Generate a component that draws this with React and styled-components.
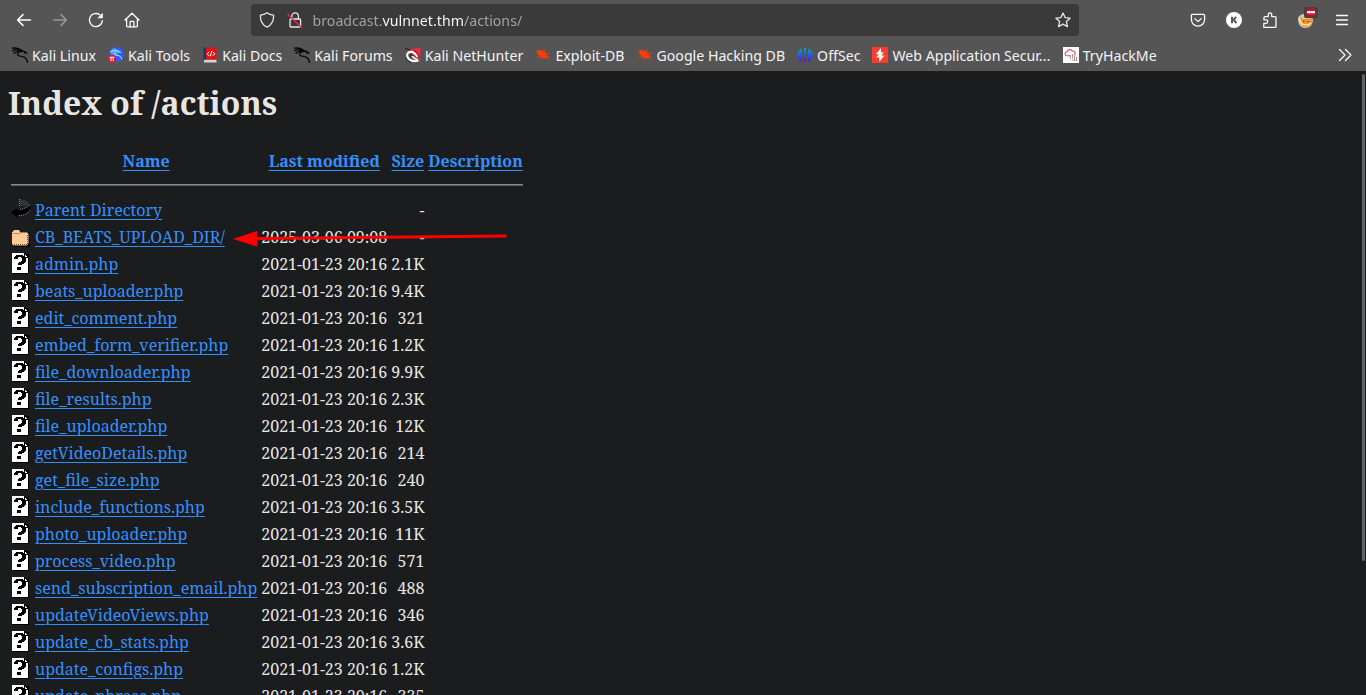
import React from "react";
import styled, { createGlobalStyle } from "styled-components";

const UI = '"Noto Sans Display", "Noto Sans", "Open Sans", sans-serif';
const SERIF = '"Noto Serif", "DejaVu Serif Condensed", "DejaVu Serif", serif';

const GlobalStyle = createGlobalStyle`
  *, *::before, *::after { box-sizing: border-box; }
  body { margin: 0; background: #1b1c1e; }
`;

const Browser = styled.div`
  height: 100vh;
  display: flex;
  flex-direction: column;
  overflow: hidden;
`;

const Chrome = styled.header`
  flex: none;
  background: #555555;
  color: #f0f0f2;
  font-family: ${UI};
  font-size: 15px;
`;

const NavBar = styled.nav`
  display: flex;
  align-items: center;
  height: 40px;
  padding: 0 6px;
`;

const ToolButton = styled.button`
  flex: none;
  width: 36px;
  height: 32px;
  display: flex;
  align-items: center;
  justify-content: center;
  padding: 0;
  border: 0;
  border-radius: 4px;
  background: none;
  color: #fbfbfe;
  opacity: ${(p) => (p.disabled ? 0.4 : 1)};
`;

const Spacer = styled.div`
  flex: 1;
`;

const UrlBar = styled.div`
  flex: 8.2;
  min-width: 0;
  height: 32px;
  display: flex;
  align-items: center;
  padding: 0 2px;
  border-radius: 4px;
  background: #3a3a3a;
`;

const UrlButton = styled(ToolButton)`
  width: 28px;
  color: #e6e6e8;
`;

const UrlInput = styled.input`
  flex: 1;
  min-width: 0;
  height: 28px;
  margin-left: 4px;
  padding: 0;
  border: 0;
  outline: 0;
  font: inherit;
  color: transparent;
  caret-color: #fbfbfe;
  background: linear-gradient(
    90deg,
    #a3a3a5 0 69px,
    #fbfbfe 69px 150px,
    #a3a3a5 150px
  );
  background-clip: text;
  -webkit-background-clip: text;
`;

const Bookmarks = styled.div`
  display: flex;
  align-items: center;
  height: 31px;
  padding: 0 12px 1px;
  gap: 12px;
`;

const Bookmark = styled.a`
  flex: none;
  display: flex;
  align-items: center;
  gap: 4px;
  height: 24px;
  color: inherit;
  text-decoration: none;
  white-space: nowrap;
`;

const Overflow = styled(ToolButton)`
  width: 18px;
  height: 24px;
  margin-left: auto;
`;

const Page = styled.main`
  flex: 1;
  min-height: 0;
  position: relative;
  overflow: hidden;
  padding: 0 8px;
  background: #1b1c1e;
  color: #e8e6e3;
  font-family: ${SERIF};
  font-size: 16px;
  line-height: 22px;
`;

const Title = styled.h1`
  margin: 10px 0 21px;
  font-size: 32px;
  line-height: 44px;
  font-weight: 700;
`;

const Listing = styled.table`
  border-collapse: separate;
  border-spacing: 2px;
  white-space: nowrap;

  th,
  td {
    padding: 1px;
  }
`;

const Row = styled.tr`
  height: 25px;
`;

const IconCell = styled.td`
  vertical-align: top;
`;

const NumCell = styled.td`
  text-align: right;
`;

const PageLink = styled.a`
  color: #3391ff;
  text-decoration: underline;
  text-decoration-thickness: 1px;
  text-underline-offset: 3px;
`;

const Rule = styled.hr`
  height: 2px;
  margin: 8px 0;
  border: 0;
  border-top: 1px solid #8a8a8a;
  background: #5c5c5c;
`;

const Block = styled.svg`
  display: block;
  flex: none;
`;

const Marker = styled.svg`
  position: absolute;
  left: 232px;
  top: 158px;
  pointer-events: none;
`;

const ScrollThumb = styled.div`
  position: absolute;
  right: 1px;
  top: 3px;
  width: 3px;
  height: 78%;
  border-radius: 2px;
  background: #626262;
`;

const Icon = ({ children, size = 16, ...rest }) => (
  <Block
    width={size}
    height={size}
    viewBox="0 0 16 16"
    fill="none"
    stroke="currentColor"
    strokeWidth="1.3"
    strokeLinecap="round"
    strokeLinejoin="round"
    aria-hidden="true"
    {...rest}
  >
    {children}
  </Block>
);

const BackIcon = () => (
  <Icon strokeWidth="1.5"><path d="M14.5 8H1.8M7 2.6 1.6 8 7 13.4" /></Icon>
);
const ForwardIcon = () => (
  <Icon strokeWidth="1.5"><path d="M1.5 8h12.7M9 2.6 14.4 8 9 13.4" /></Icon>
);
const ReloadIcon = () => (
  <Icon>
    <path d="M14.4 8.6A6.5 6.5 0 1 1 11.8 2.8" />
    <path d="M14.8.8v5.4H9.4z" fill="currentColor" stroke="none" />
  </Icon>
);
const HomeIcon = () => (
  <Icon>
    <path d="M1 8 8 1.2 15 8M2.6 6.8v7.3c0 .5.3.8.8.8h9.2c.5 0 .8-.3.8-.8V6.8" />
    <path d="M6.1 14.8V10c0-.4.3-.7.7-.7h2.4c.4 0 .7.3.7.7v4.8" />
  </Icon>
);
const ShieldIcon = () => (
  <Icon>
    <path d="M8 .8c2 1.5 4.3 2.200 6.600 2.400.2 5.400-1.500 9.500-6.600 12C2.900 12.700 1.200 8.600 1.400 3.200 3.700 3 6 2.300 8 .8z" />
  </Icon>
);
const LockIcon = () => (
  <Icon>
    <path d="M4.8 7V4.200a3.300 3.300 0 0 1 6.600 0V7" />
    <rect x="3" y="7" width="10.600" height="8" rx="1" />
    <path d="M1 2.500 14.500 15.500" stroke="#e22850" strokeWidth="1.500" />
  </Icon>
);
const StarIcon = () => (
  <Icon>
    <path d="m8 1 2.100 4.600 5 .6-3.700 3.400 1 5L8 12.100l-4.400 2.500 1-5L.9 6.200l5-.6z" />
  </Icon>
);
const PocketIcon = () => (
  <Icon>
    <path d="M2.600 2.300h10.800c.7 0 1.200.5 1.200 1.200v4a6.600 6.600 0 0 1-13.200 0v-4c0-.7.500-1.200 1.200-1.200z" />
    <path d="M4.800 6.600 8 9.600l3.200-3" />
  </Icon>
);
const AccountIcon = () => (
  <Icon>
    <circle cx="8" cy="8" r="8" fill="#fff" stroke="none" />
    <path d="M6 4.800v6.400M10.300 4.900 6.400 8.600M7.700 7.600l2.800 3.500" stroke="#555" strokeWidth="1.900" strokeLinecap="butt" />
  </Icon>
);
const PuzzleIcon = () => (
  <Icon>
    <path d="M1.800 15.300h11.300a.9.9 0 0 0 .9-.9V5.600a.9.9 0 0 0-.9-.9H9.700V2.500a1.700 1.700 0 0 0-3.400 0v2.200H2.900a.9.9 0 0 0-.9.9v2.300h2.100a1.700 1.700 0 0 1 0 3.400H1.800z" />
  </Icon>
);
const FoxIcon = () => (
  <Block width="20" height="20" viewBox="0 0 20 20" overflow="visible" aria-hidden="true">
    <path d="M2 9c0-3 3-5 7-5l8 5c0 5-2.500 9-7.500 9S2 14 2 9z" fill="#d7c3a4" />
    <path d="M4 7.500 7.500 9l7-.5 2 .5-1 5-5 3.500-5-2.500z" fill="#f0932b" />
    <path d="M3 8.500 6 14l5 1.200 4-2" stroke="#fff0d8" strokeWidth="1.200" fill="none" />
    <path d="M7 11.500h1.500M11.500 11.500H13" stroke="#68411d" />
    <rect x="8" y="-3" width="14" height="11" rx="2" fill="#414141" />
    <ellipse cx="15" cy="2.500" rx="5" ry="4.800" fill="#c8102e" />
    <path d="M11 2.200h8" stroke="#fff" strokeWidth="2.200" />
  </Block>
);
const MenuIcon = () => (
  <Icon><path d="M2.500 3.500h11M2.500 8h11M2.500 12.500h11" /></Icon>
);
const MoreIcon = () => (
  <Icon><path d="m2.500 2.500 5.500 5.500-5.500 5.500M8.500 2.500 14 8l-5.500 5.500" /></Icon>
);

const dragon = (
  <>
    <path d="M.3 1.200C4 .6 7.500 1.300 10.600 4M.4 3.800C3 2.300 6.500 2.500 10 4.300M2 6.200C4 4.200 6 4 8.500 4.600" />
    <path d="M9 3.900c2.500-.3 4 .6 5.800 2.100l-2.400-.2M10.500 4.400C6.500 4.500 5 6.200 5.700 8c.8 1.700 4 1.100 6.800 2.300 1.900.9 2.500 2.700 2.900 5" />
  </>
);
const KaliIcon = () => (
  <Icon stroke="#080808" strokeWidth="1.300">{dragon}</Icon>
);
const ToolsIcon = () => (
  <Icon stroke="none">
    <circle cx="8.500" cy="7.500" r="7.300" fill="#2f5bff" />
    <path d="M2 5a7.300 7.300 0 0 1 4-4.200l7 4-8 6z" fill="#35a1ff" />
    <path d="M3 4.500c4-1.500 7-1 9.500 1M7 5.500c-2 1.800 1.500 3 4 3.300 1.500.5 2.500 1.700 2.700 3.200" stroke="#dce9ff" strokeWidth="1" />
    <circle cx="4" cy="11.800" r="4" fill="#e3122e" />
    <path d="M2 10.300h4M3 10.300v3.500M5.200 10.300v3.500" stroke="#fff" strokeWidth="1" />
  </Icon>
);
const DocsIcon = () => (
  <Icon stroke="none">
    <path d="M1.500.5h13v12h-13z" fill="#e01212" />
    <path d="M1.500.5H4v13H1.500z" fill="#1f3472" />
    <path d="M2 12.800h12.500v2.700H2z" fill="#d8d1d1" />
    <path d="m7 5-1.800 1.800L7 8.600M11 5l1.800 1.800L11 8.600M9.700 4.500 8.400 9" stroke="#fff" strokeWidth="1" />
  </Icon>
);
const NetHunterIcon = () => (
  <Icon stroke="none">
    <path d="M2.500 2.500 15.800.8 14.800 15z" fill="#ef2b3d" />
    <path d="M.8 1.500 5 3" stroke="#241c1e" />
    <path d="M12 9C8 2.500 1.500 4.500 2.200 9c.7 3.700 5 6 10.500 4.800" stroke="#fff" strokeWidth="2.200" />
    <path d="M7.500 9.500c1 1.200 2.500 2.500 4.500 3" stroke="#fff" strokeWidth="1.600" />
    <path d="M4.700 9.200c.3-1.700 2-1.800 3.300-.9M9 3.800c2.500 1.300 4 3.500 5 6.200" stroke="#241c1e" strokeWidth=".9" />
    <path d="M.6 10.500c.8 2.700 2.500 4.200 5 4.800" stroke="#241c1e" strokeWidth=".8" />
  </Icon>
);
const ExploitIcon = () => (
  <Icon stroke="#ff3b0a" strokeWidth=".7">
    <path d="M2 4C5 2.500 8.500 3.800 11 6.500l1.700 4.500-5.200-.3C4.500 9.500 2.800 7 2 4z" fill="#ff3b0a" />
    <path d="m9 5 1-2.500M11 6.500l3.500-.3M5 9.500l-3.500 1M8 10.500 5.500 12.500M12 9l3 1.500M12.500 11l1.500 1.500" />
  </Icon>
);
const OffSecIcon = () => (
  <Icon stroke="none">
    <defs>
      <linearGradient id="offsec" x1="0" y1="0" x2="0" y2="16" gradientUnits="userSpaceOnUse">
        <stop offset=".1" stopColor="#12a0b0" />
        <stop offset=".5" stopColor="#2060dd" />
        <stop offset=".9" stopColor="#6a0fd0" />
      </linearGradient>
    </defs>
    <path d="M5 1.500v13C-1.500 12-1.500 4 5 1.500zM11 1.500c6.500 2.500 6.500 10.500 0 13zM7 1h2v14H7z" fill="url(#offsec)" />
  </Icon>
);
const BurpIcon = () => (
  <Icon stroke="none">
    <path d="M0 0h16v16H0z" fill="#ff3d2e" />
    <path d="M9 1v4.500l2.800 0L9.200 8.500h3.300L7.200 15v-4.500H4.200L7 7.300H3.800z" fill="#fff" />
  </Icon>
);
const ThmIcon = () => (
  <Icon stroke="none">
    <path d="M0 0h16v16H0z" fill="#fff" />
    <path d="M7 8.800H4.200a2 2 0 0 1-.2-4c.5-2.600 4.500-3 5.300-.7 2.300-.3 3.700 1.700 2.400 3.500" stroke="#e2525c" strokeWidth="1.100" />
    <path d="M7.500 8.500v3M9.500 7.500v4M11.500 8.500v5M13.500 10v4M9 13h1.500" stroke="#a8888e" strokeDasharray="1.200 1" strokeWidth="1.100" />
  </Icon>
);

const FileSvg = ({ children }) => (
  <Block width="20" height="22" viewBox="0 0 20 22" aria-hidden="true">
    {children}
  </Block>
);
const UnknownFile = () => (
  <FileSvg>
    <g shapeRendering="crispEdges">
      <path d="M2 2h16v20H2z" fill="#000" />
      <path d="M1 1h12v1h1v1h1v1h1v1h1v16H1z" fill="#fff" />
      <path d="M13 1h1v1h1v1h1v1h1v2h-4z" fill="#000" />
      <path d="M14 3h1v1h1v1h-2z" fill="#fff" />
      <path d="M5 3h7v1h2v2h1v4h-1v1h-1v1h-2v1H7v-2h1v-1h2V9h1V6h-1V5H7v2H3V5h1V4h1zM6 15h4v3H6z" fill="#000" />
      <path d="M8 12h2v1H8z" fill="#000" />
    </g>
  </FileSvg>
);
const FolderFile = () => (
  <FileSvg>
    <path d="M2 5h6l2 2h7.500l1.500 1.500v11.500L17.500 22H3l-2-2z" fill="#000" />
    <path d="M1 7.500 3 5h5l1.500 2.500H16L17.500 9v9.500L16 20.500H2.500L1 19z" fill="#ffcc99" />
    <path d="M2 8.500h7l1.500-1h6" stroke="#b87a45" strokeWidth=".8" fill="none" />
    <path d="M3 19.500h13M16.500 10v9" stroke="#7a4a22" strokeDasharray="1 1" />
  </FileSvg>
);
const BackFile = () => (
  <FileSvg>
    <path d="M8.500 1.500C14 1.500 18 4 19 7.500l-4 .5-6-.5z" fill="#343434" />
    <path d="M0 14.500 6 10l.5 2C12 12 16.500 10 19.500 7v4.500C17 15.500 12 17.500 6.500 17v3z" fill="#000" />
    <path d="M8.500 1v7M9 11.500C13 10.500 16 9.500 19 7M8 17.500c5 0 9-2 11.500-5.500" stroke="#aaa" strokeWidth=".8" strokeDasharray="1 1" fill="none" />
  </FileSvg>
);
const BlankFile = () => <FileSvg />;

const bookmarks = [
  ["Kali Linux", KaliIcon],
  ["Kali Tools", ToolsIcon],
  ["Kali Docs", DocsIcon],
  ["Kali Forums", KaliIcon],
  ["Kali NetHunter", NetHunterIcon],
  ["Exploit-DB", ExploitIcon],
  ["Google Hacking DB", ExploitIcon],
  ["OffSec", OffSecIcon],
  ["Web Application Secur…", BurpIcon],
  ["TryHackMe", ThmIcon],
];

const D = "2021-01-23 20:16";
const files = [
  ["Parent Directory", "", "-", BackFile],
  ["CB_BEATS_UPLOAD_DIR/", "2025-03-06 09:08", "-", FolderFile],
  ["admin.php", D, "2.1K"],
  ["beats_uploader.php", D, "9.4K"],
  ["edit_comment.php", D, "321"],
  ["embed_form_verifier.php", D, "1.2K"],
  ["file_downloader.php", D, "9.9K"],
  ["file_results.php", D, "2.3K"],
  ["file_uploader.php", D, "12K"],
  ["getVideoDetails.php", D, "214"],
  ["get_file_size.php", D, "240"],
  ["include_functions.php", D, "3.5K"],
  ["photo_uploader.php", D, "11K"],
  ["process_video.php", D, "571"],
  ["send_subscription_email.php", D, "488"],
  ["updateVideoViews.php", D, "346"],
  ["update_cb_stats.php", D, "3.6K"],
  ["update_configs.php", D, "1.2K"],
  ["update_phrase.php", D, "335"],
];

export default function App() {
  return (
    <Browser>
      <GlobalStyle />
      <Chrome>
        <NavBar aria-label="Browser">
          <ToolButton aria-label="Back"><BackIcon /></ToolButton>
          <ToolButton aria-label="Forward" disabled><ForwardIcon /></ToolButton>
          <ToolButton aria-label="Reload"><ReloadIcon /></ToolButton>
          <ToolButton aria-label="Home"><HomeIcon /></ToolButton>
          <Spacer />
          <UrlBar>
            <UrlButton aria-label="Tracking protection"><ShieldIcon /></UrlButton>
            <UrlButton aria-label="Connection not secure"><LockIcon /></UrlButton>
            <UrlInput aria-label="Address" defaultValue="broadcast.vulnnet.thm/actions/" />
            <UrlButton aria-label="Bookmark this page"><StarIcon /></UrlButton>
          </UrlBar>
          <Spacer />
          <ToolButton aria-label="Save to Pocket"><PocketIcon /></ToolButton>
          <ToolButton aria-label="Account"><AccountIcon /></ToolButton>
          <ToolButton aria-label="Extensions"><PuzzleIcon /></ToolButton>
          <ToolButton aria-label="Proxy extension"><FoxIcon /></ToolButton>
          <ToolButton aria-label="Menu"><MenuIcon /></ToolButton>
        </NavBar>
        <Bookmarks>
          {bookmarks.map(([label, Glyph]) => (
            <Bookmark key={label} href="#">
              <Glyph />
              {label}
            </Bookmark>
          ))}
          <Overflow aria-label="More bookmarks"><MoreIcon /></Overflow>
        </Bookmarks>
      </Chrome>
      <Page>
        <Title>Index of /actions</Title>
        <Listing>
          <thead>
            <Row>
              <IconCell><BlankFile /></IconCell>
              <th scope="col"><PageLink href="#name">Name</PageLink></th>
              <th scope="col"><PageLink href="#modified">Last modified</PageLink></th>
              <th scope="col"><PageLink href="#size">Size</PageLink></th>
              <th scope="col"><PageLink href="#description">Description</PageLink></th>
            </Row>
          </thead>
          <tbody>
            <tr>
              <td colSpan="5"><Rule /></td>
            </tr>
            {files.map(([name, date, size, Glyph = UnknownFile]) => (
              <Row key={name}>
                <IconCell><Glyph /></IconCell>
                <td><PageLink href={"#" + name}>{name}</PageLink></td>
                <td>{date}</td>
                <NumCell>{size}</NumCell>
                <td />
              </Row>
            ))}
          </tbody>
        </Listing>
        <Marker width="276" height="18" viewBox="0 0 276 18" aria-hidden="true">
          <path d="M24 9.500 274.500 7" stroke="#ff0000" strokeWidth="3" />
          <path d="M1 10 25 2v15.500z" fill="#ff0000" />
        </Marker>
        <ScrollThumb />
      </Page>
    </Browser>
  );
}
